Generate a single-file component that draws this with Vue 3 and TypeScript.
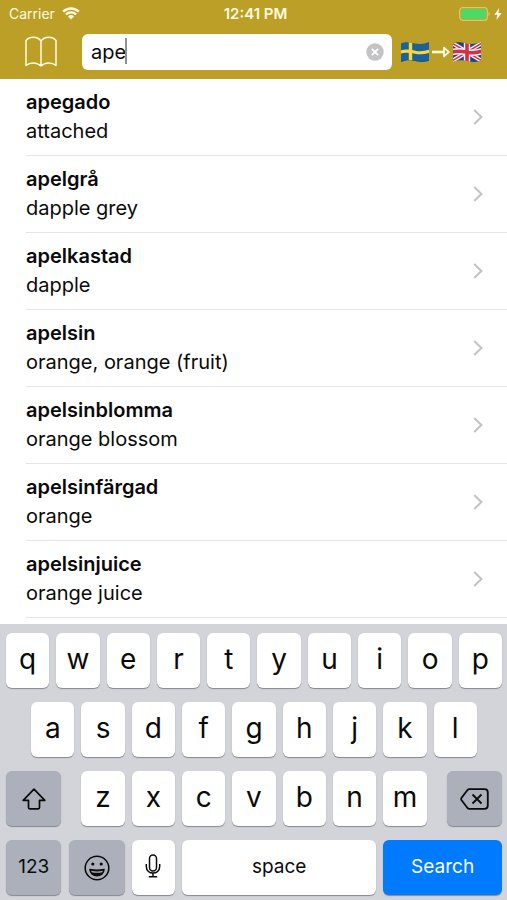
<script setup lang="ts">
import { ref } from 'vue'

interface Entry {
  word: string
  translation: string
}

const query = ref<string>('ape')

const entries: Entry[] = [
  { word: 'apegado', translation: 'attached' },
  { word: 'apelgrå', translation: 'dapple grey' },
  { word: 'apelkastad', translation: 'dapple' },
  { word: 'apelsin', translation: 'orange, orange (fruit)' },
  { word: 'apelsinblomma', translation: 'orange blossom' },
  { word: 'apelsinfärgad', translation: 'orange' },
  { word: 'apelsinjuice', translation: 'orange juice' },
]

const topKeys: string[] = [...'qwertyuiop']
const middleKeys: string[] = [...'asdfghjkl']
const bottomKeys: string[] = [...'zxcvbnm']

function type(key: string): void {
  query.value += key
}

function erase(): void {
  query.value = query.value.slice(0, -1)
}
</script>

<template>
  <div class="screen">
    <header class="header">
      <div class="status">
        <div class="status-left">
          <span>Carrier</span>
          <svg class="wifi" viewBox="0 0 18 13" aria-hidden="true">
            <path d="M1.2 4.6a11.2 11.2 0 0 1 15.6 0M3.9 7.5a7.3 7.3 0 0 1 10.2 0" fill="none" stroke="currentColor" stroke-width="2.4" />
            <path d="M5.9 9.4a4.5 4.5 0 0 1 6.2 0L9 12.6z" fill="currentColor" />
          </svg>
        </div>
        <span class="clock">12:41 PM</span>
        <div class="status-right">
          <svg class="battery" viewBox="0 0 32 14" aria-hidden="true">
            <rect x="0.7" y="0.7" width="27.6" height="12.6" rx="3" fill="none" stroke="#e2c66e" stroke-width="1.2" />
            <rect x="2" y="2" width="25" height="10" rx="1.5" fill="#4cd964" />
            <path d="M29.5 4.8c1.6.6 1.6 3.8 0 4.4z" fill="#e2c66e" />
          </svg>
          <svg class="bolt" viewBox="0 0 8 12" aria-hidden="true">
            <path d="M5.2 0 .4 6.8h3L2.4 12l5.2-7H4.4z" fill="#fff" />
          </svg>
        </div>
      </div>
      <div class="toolbar">
        <button class="book" type="button" aria-label="Dictionary">
          <svg viewBox="0 0 32 32" aria-hidden="true">
            <path d="M16 5C12.5 .2 4.5 .2 1 4.5V29.5C5 26 12 26 16 30C20 26 27 26 31 29.5V4.5C27.5 .2 19.5 .2 16 5ZM16 5V30" fill="none" stroke="currentColor" stroke-width="1.5" stroke-linejoin="round" />
          </svg>
        </button>
        <div class="field">
          <input v-model="query" type="text" aria-label="Search words" autocomplete="off" />
          <span class="caret"></span>
          <button class="clear" type="button" aria-label="Clear" @click="query = ''">
            <svg viewBox="0 0 18 18" aria-hidden="true">
              <circle cx="9" cy="9" r="8.7" fill="#c4c4c6" />
              <path d="M5.8 5.8l6.4 6.4M12.2 5.8l-6.4 6.4" stroke="#fff" stroke-width="1.8" />
            </svg>
          </button>
        </div>
        <button class="direction" type="button" aria-label="Swedish to English">
          <svg class="flag" viewBox="0 0 30 22" aria-hidden="true">
            <defs>
              <clipPath id="wave"><path d="M1 2.5C6 .2 10 1.5 15 2.5S25 3 29 1V19.5C25 21.5 20 21 15 20S6 19 1 21Z" /></clipPath>
            </defs>
            <g clip-path="url(#wave)">
              <rect width="30" height="22" fill="#1b629b" />
              <path d="M0 11.2C6 9.2 10 10.2 15 11.2S25 11.8 30 10" fill="none" stroke="#fbd63b" stroke-width="3.2" />
              <path d="M10.5 0V22" stroke="#fbd63b" stroke-width="3.4" />
              <path d="M0 20.5C6 18 10 18.5 15 19.5S25 20.5 30 18.5V22H0Z" fill="#143a61" opacity=".45" />
            </g>
          </svg>
          <svg class="arrow" viewBox="0 0 18 12" aria-hidden="true">
            <path d="M0 6H12" stroke="#fffbe0" stroke-width="2.6" />
            <path d="M12 1.6V10.4L16.8 6Z" fill="none" stroke="#fffbe0" stroke-width="1.8" stroke-linejoin="round" />
          </svg>
          <svg class="flag" viewBox="0 0 30 22" aria-hidden="true">
            <g clip-path="url(#wave)">
              <rect width="30" height="22" fill="#26437f" />
              <path d="M0 2L30 20M0 20L30 2" stroke="#f3f1f4" stroke-width="4.2" />
              <path d="M0 2L30 20M0 20L30 2" stroke="#d2304b" stroke-width="1.5" />
              <path d="M15 0V22M0 11.2C6 9.2 10 10.2 15 11.2S25 11.8 30 10" fill="none" stroke="#f3f1f4" stroke-width="6.4" />
              <path d="M15 0V22M0 11.2C6 9.2 10 10.2 15 11.2S25 11.8 30 10" fill="none" stroke="#d2304b" stroke-width="3.6" />
            </g>
          </svg>
        </button>
      </div>
    </header>

    <main class="results">
      <ul>
        <li v-for="entry in entries" :key="entry.word">
          <a href="#">
            <span class="texts">
              <strong>{{ entry.word }}</strong>
              <span>{{ entry.translation }}</span>
            </span>
            <svg class="chevron" viewBox="0 0 10 16" aria-hidden="true">
              <path d="M1.2 1L8.4 8L1.2 15" fill="none" stroke="#c3c3c7" stroke-width="2" />
            </svg>
          </a>
        </li>
      </ul>
    </main>

    <section class="keyboard" aria-label="Keyboard">
      <div class="keys">
        <button v-for="key in topKeys" :key="key" class="key" type="button" @click="type(key)">{{ key }}</button>
      </div>
      <div class="keys middle">
        <button v-for="key in middleKeys" :key="key" class="key" type="button" @click="type(key)">{{ key }}</button>
      </div>
      <div class="keys">
        <button class="key dark shift" type="button" aria-label="Shift">
          <svg class="shift-icon" viewBox="0 0 24 22" aria-hidden="true">
            <path d="M12 1.2L22.8 12.3H17.5V19.5Q17.5 20.8 16.2 20.8H7.8Q6.5 20.8 6.5 19.5V12.3H1.2Z" fill="none" stroke="currentColor" stroke-width="1.7" stroke-linejoin="round" />
          </svg>
        </button>
        <button v-for="key in bottomKeys" :key="key" class="key" type="button" @click="type(key)">{{ key }}</button>
        <button class="key dark erase" type="button" aria-label="Delete" @click="erase">
          <svg class="erase-icon" viewBox="0 0 29 22" aria-hidden="true">
            <path d="M9.3 1.2H24.5Q27.8 1.2 27.8 4.5V17.5Q27.8 20.8 24.5 20.8H9.3Q8.3 20.8 7.5 20L1.6 12.3Q.7 11 1.6 9.7L7.5 2Q8.3 1.2 9.3 1.2Z" fill="none" stroke="currentColor" stroke-width="1.8" />
            <path d="M12.5 6.5l9 9M21.5 6.5l-9 9" stroke="currentColor" stroke-width="1.8" />
          </svg>
        </button>
      </div>
      <div class="keys">
        <div class="modes">
          <button class="key dark label" type="button">123</button>
          <button class="key dark" type="button" aria-label="Emoji">
            <svg class="emoji-icon" viewBox="0 0 26 26" aria-hidden="true">
              <circle cx="13" cy="13" r="11.8" fill="none" stroke="currentColor" stroke-width="1.5" />
              <circle cx="8.8" cy="9" r="1.6" fill="currentColor" />
              <circle cx="17.2" cy="9" r="1.6" fill="currentColor" />
              <path d="M5.8 14.3Q13 16 20.2 14.3C20 23 6 23 5.8 14.3Z" fill="currentColor" stroke="currentColor" stroke-width="1.2" stroke-linejoin="round" />
              <path d="M7.2 15.8Q13 17.2 18.8 15.8L18.3 17.2Q13 18.5 7.7 17.2Z" fill="#abb0bb" />
            </svg>
          </button>
        </div>
        <button class="key" type="button" aria-label="Dictate">
          <svg class="mic-icon" viewBox="0 0 16 24" aria-hidden="true">
            <rect x="4.5" y="1" width="7" height="16" rx="3.5" fill="none" stroke="currentColor" stroke-width="1.5" />
            <path d="M1.3 10V12.5C1.3 21.3 14.7 21.3 14.7 12.5V10M8 19V22.5M3.8 22.8H12.2" fill="none" stroke="currentColor" stroke-width="1.5" />
          </svg>
        </button>
        <button class="key label space" type="button" @click="type(' ')">space</button>
        <button class="key label search" type="button">Search</button>
      </div>
    </section>
  </div>
</template>

<style>
body {
  margin: 0;
}
</style>

<style scoped>
.screen {
  display: flex;
  flex-direction: column;
  min-height: 100vh;
  background: #fff;
  color: #0a0a0a;
  font-family: Inter, "Liberation Sans", sans-serif;
}

button,
input {
  margin: 0;
  padding: 0;
  border: 0;
  background: none;
  color: inherit;
  font: inherit;
}

svg {
  display: block;
  flex: none;
}

.header {
  padding-bottom: 9px;
  background: #bb9f26;
  color: #fffbe0;
}

.status {
  display: grid;
  grid-template-columns: 1fr auto 1fr;
  align-items: center;
  height: 27px;
  padding: 0 5px 0 9px;
  font-size: 14px;
}

.status-left,
.status-right {
  display: flex;
  align-items: center;
}

.status-left {
  gap: 7px;
}

.status-right {
  justify-content: flex-end;
  gap: 3px;
}

.clock {
  font-size: 15px;
  font-weight: 600;
}

.wifi {
  width: 18px;
  height: 13px;
}

.battery {
  width: 32px;
  height: 14px;
}

.bolt {
  width: 8px;
  height: 12px;
}

.toolbar {
  display: flex;
  align-items: center;
  padding: 7px 25px 0;
}

.book {
  flex: none;
}

.book svg {
  width: 32px;
  height: 32px;
}

.field {
  position: relative;
  display: flex;
  flex: 1;
  align-items: center;
  min-width: 0;
  height: 36px;
  margin: 0 8px 0 25px;
  padding: 0 8px 0 9px;
  box-sizing: border-box;
  border-radius: 6px;
  background: #fff;
}

.field input {
  flex: 1;
  min-width: 0;
  height: 36px;
  outline: 0;
  color: #0a0a0a;
  font-size: 20px;
}

.caret {
  position: absolute;
  top: 4px;
  left: 43px;
  width: 2px;
  height: 26px;
  background: #8b9298;
}

.clear svg {
  width: 18px;
  height: 18px;
}

.direction {
  display: grid;
  flex: none;
  grid-template-columns: 30px 18px 30px;
  align-items: center;
  column-gap: 2px;
  width: 82px;
}

.flag {
  width: 30px;
  height: 22px;
}

.arrow {
  width: 18px;
  height: 12px;
}

.results {
  flex: 1;
}

.results ul {
  margin: 0;
  padding: 0 0 0 26px;
  list-style: none;
}

.results li {
  border-bottom: 1px solid #e6e6e8;
}

.results a {
  display: flex;
  align-items: center;
  justify-content: space-between;
  height: 76px;
  padding-right: 24px;
  color: inherit;
  text-decoration: none;
}

.texts {
  display: flex;
  flex-direction: column;
  font-size: 20px;
  line-height: 29px;
}

.texts strong {
  font-weight: 600;
}

.chevron {
  width: 10px;
  height: 16px;
}

.keyboard {
  display: grid;
  gap: 14px;
  padding: 9px 5px 5px 6px;
  background: #d2d4da;
}

.keys {
  display: grid;
  grid-template-columns: repeat(20, minmax(0, 1fr));
  column-gap: 7px;
}

.key {
  display: flex;
  grid-column-end: span 2;
  align-items: center;
  justify-content: center;
  height: 55px;
  padding-bottom: 3px;
  border-radius: 6px;
  background: #fff;
  box-shadow: 0 1px 1px #85888e;
  color: #0a0a0a;
  font-size: 28px;
}

.middle .key:first-child {
  grid-column-start: 2;
}

.dark {
  padding-bottom: 0;
  background: #abb0bb;
}

.shift {
  grid-column-end: span 3;
  margin-right: 13px;
}

.erase {
  grid-column-end: span 3;
  margin-left: 13px;
}

.modes {
  display: flex;
  grid-column-end: span 5;
  gap: 8px;
}

.modes .key {
  flex: 1;
}

.label {
  padding-bottom: 3px;
  font-size: 19px;
}

.space {
  grid-column-end: span 8;
}

.search {
  grid-column-end: span 5;
  background: #007aff;
  color: #fff;
}

.shift-icon {
  width: 24px;
  height: 22px;
}

.erase-icon {
  width: 29px;
  height: 22px;
}

.emoji-icon {
  width: 26px;
  height: 26px;
}

.mic-icon {
  width: 16px;
  height: 24px;
}
</style>
